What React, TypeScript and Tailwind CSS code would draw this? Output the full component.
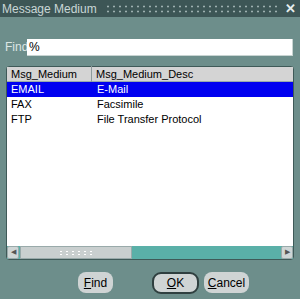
import React from "react";

const rows = [
  { code: "EMAIL", desc: "E-Mail", selected: true },
  { code: "FAX", desc: "Facsimile" },
  { code: "FTP", desc: "File Transfer Protocol" },
];

const Dots = () => (
  <div
    className="h-[10px] flex-1"
    style={{
      backgroundImage:
        "radial-gradient(circle, #9db0b0 0.9px, transparent 1.2px)",
      backgroundSize: "6px 5px",
    }}
  />
);

export default function App() {
  return (
    <div
      className="flex h-[299px] w-[300px] flex-col bg-[#6d8e8b] text-[11px] text-black"
      style={{ fontFamily: '"Liberation Sans", Arial, sans-serif' }}
    >
      {/* title bar */}
      <div className="flex h-[17px] items-center gap-[8px] bg-[#3d5656] pl-[2px] pr-[4px]">
        <span className="text-[12px] text-[#c9d6d6]">Message Medium</span>
        <Dots />
        <span className="text-[13px] font-bold leading-none text-[#e6eeee]">
          ✕
        </span>
      </div>

      {/* find */}
      <div className="mt-[21px] flex items-center pl-[5px] pr-[7px]">
        <span className="w-[22px] text-[12px] text-[#dce6e4]">Find</span>
        <div className="flex h-[17px] flex-1 items-center border-b border-r border-[#c8d4d2] bg-white pl-[2px] text-[12px]">
          %
        </div>
      </div>

      {/* table */}
      <div className="mx-[6px] mt-[10px] flex h-[194px] flex-col rounded-[3px] border border-[#3f5a58] bg-white">
        <div className="flex h-[15px] items-center border-b border-[#9aa] bg-[#d4d4d4]">
          <div className="w-[85px] border-r border-[#8c9a9a] pl-[4px]">
            Msg_Medium
          </div>
          <div className="pl-[4px]">Msg_Medium_Desc</div>
        </div>
        <div className="flex-1">
          {rows.map((r) => (
            <div
              key={r.code}
              className={
                r.selected
                  ? "flex h-[15px] items-center bg-[#0000f0] text-white"
                  : "flex h-[15px] items-center"
              }
            >
              <div className="w-[85px] pl-[4px]">{r.code}</div>
              <div className="pl-[5px]">{r.desc}</div>
            </div>
          ))}
        </div>
        {/* scrollbar */}
        <div className="flex h-[13px] items-stretch bg-[#5ab0a8]">
          <div className="flex w-[12px] items-center justify-center rounded-[2px] border border-[#9aa] bg-[#cfd6d6] text-[7px] text-[#555]">
            ◀
          </div>
          <div className="ml-[1px] flex w-[112px] items-center justify-center border border-[#9aa] bg-[#c9cfcf]">
            <div
              className="h-[6px] w-[36px]"
              style={{
                backgroundImage:
                  "radial-gradient(circle, #ffffff 0.8px, transparent 1.1px)",
                backgroundSize: "6px 3px",
              }}
            />
          </div>
          <div className="flex-1" />
          <div className="flex w-[12px] items-center justify-center rounded-[2px] border border-[#9aa] bg-[#cfd6d6] text-[7px] text-[#555]">
            ▶
          </div>
        </div>
      </div>

      {/* buttons */}
      <div className="mt-[12px] flex items-start pl-[78px]">
        <button className="h-[21px] w-[35px] rounded-[8px] bg-[#cfd4d4] text-[12px]">
          <span className="underline">F</span>ind
        </button>
        <button className="ml-[39px] h-[22px] w-[47px] rounded-[9px] border-2 border-[#2f3f3f] bg-[#cfd4d4] text-[12px]">
          <span className="underline">O</span>K
        </button>
        <button className="ml-[5px] h-[21px] w-[45px] rounded-[8px] bg-[#cfd4d4] text-[12px]">
          <span className="underline">C</span>ancel
        </button>
      </div>
    </div>
  );
}
